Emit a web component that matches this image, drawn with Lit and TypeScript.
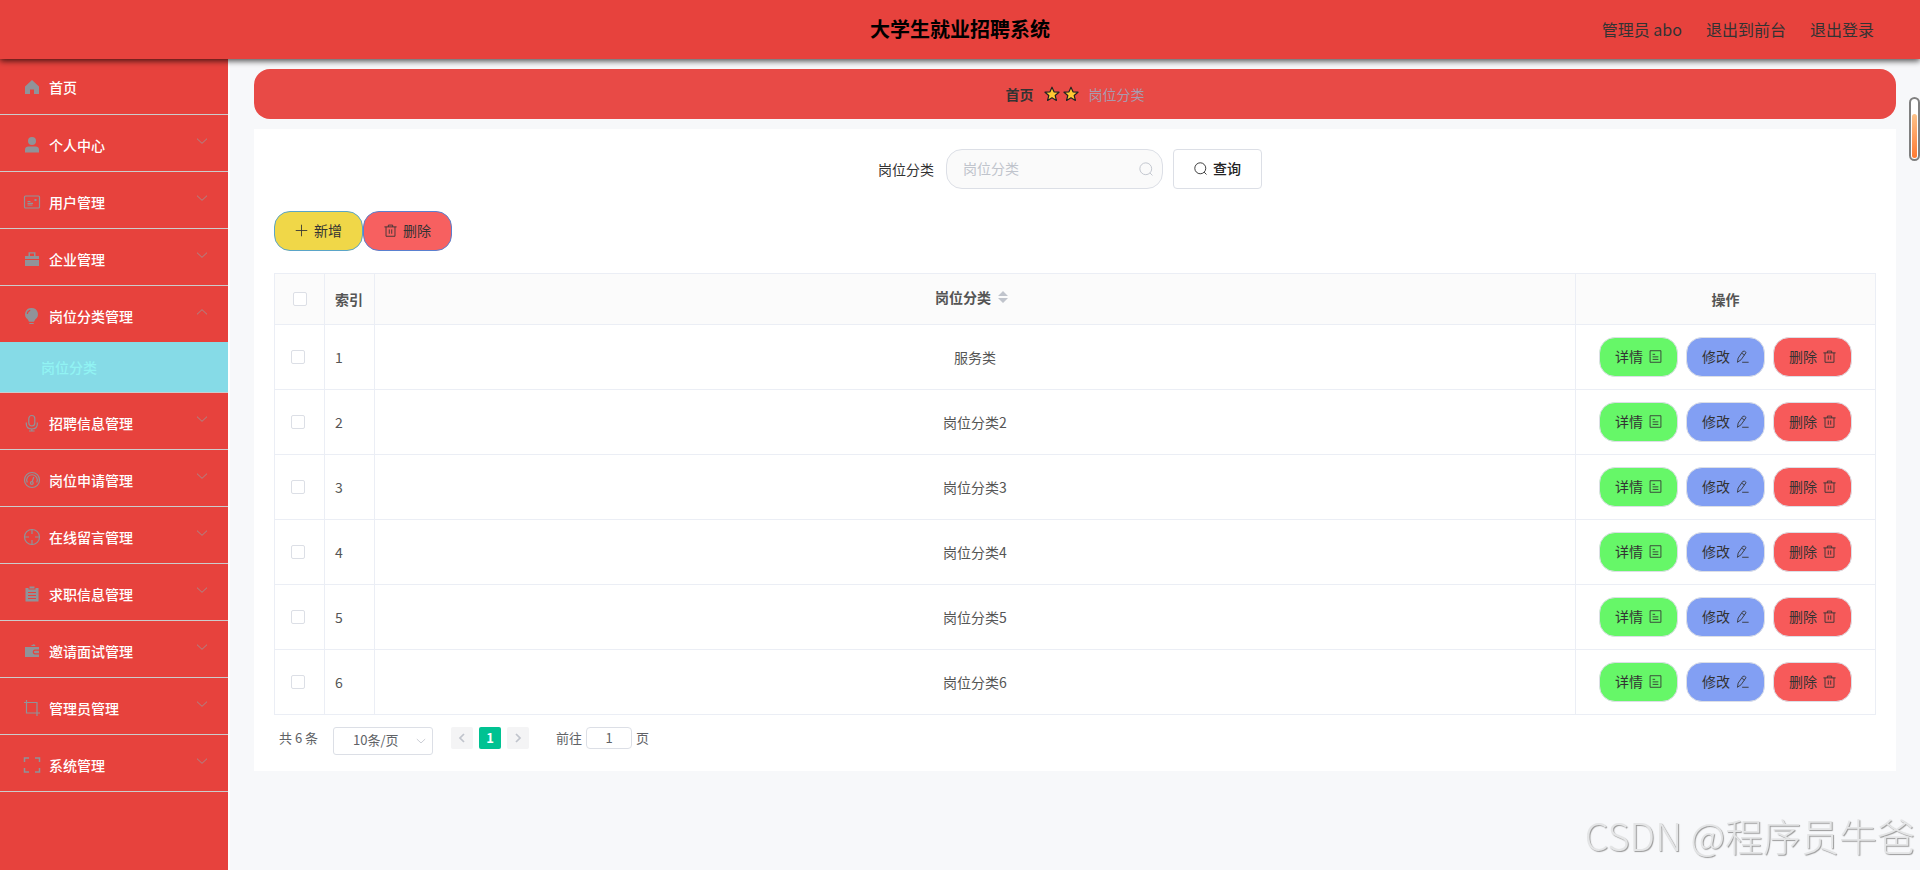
import { LitElement, html, svg, css } from "lit";
import { customElement } from "lit/decorators.js";

const glyphs: Record<string, unknown> = {
  home: svg`<path d="M2 8.600 9 2l7 6.600V16h-5v-4.500H7V16H2z" fill="currentColor"/>`,
  user: svg`<circle cx="9" cy="5" r="4" fill="currentColor"/><path d="M2 16.500v-2.700c0-2.200 1.500-3.300 3.400-3.300h7.200c1.900 0 3.400 1.100 3.400 3.300v2.700z" fill="currentColor"/>`,
  card: svg`<rect x="1.500" y="3" width="15" height="12" rx="1"/><path d="M4.500 8.500h3M4.500 10.300h5.500M4.500 12h5"/><path d="M11.500 6h2v2h-2z" fill="currentColor"/>`,
  briefcase: svg`<path d="M2 6h3.500V2.200h7V6H16v3H2zM7 3.600V6h4V3.600zM2 10h14v6H2z" fill="currentColor" fill-rule="evenodd"/>`,
  bulb: svg`<path d="M8.500 1a6.300 6.300 0 0 1 3.700 11.500L11 14.800H6l-1.200-2.300A6.300 6.300 0 0 1 8.500 1zM6.300 16h4.400v1H6.300z" fill="currentColor"/><path d="M4.300 7A4.300 4.300 0 0 1 7.200 3.200" stroke="#e7423d"/>`,
  mic: svg`<rect x="5.800" y="1.500" width="6" height="10.500" rx="3"/><path d="M3.300 8.500v1.500c0 3 2.200 5 5.500 5s5.500-2 5.500-5V8.500M8.800 15v2M6 17h5.600"/>`,
  gauge: svg`<circle cx="9" cy="9" r="7.500"/><path d="M4.300 11.500A5.300 5.300 0 1 1 13.700 11.500M9.200 10.500 10.800 6"/><circle cx="8.800" cy="12" r="1.400"/>`,
  aim: svg`<circle cx="9" cy="9" r="7.500"/><path d="M9 1.500v4.500M9 12v4.500M1.500 9H6M12 9h4.500"/>`,
  order: svg`<path d="M2.500 3h3v1.500h7V3h3v13.500h-13zM6.500 1.500h5v2h-5z" fill="currentColor"/><path d="M5 7.500h8M5 10.500h8M5 13.500h8" stroke="#e7423d"/>`,
  wallet: svg`<path d="M2 5h14v2.500h-4c-3 0-3 5 0 5h4V15H2zM7.500 4 11 2l1.700 2zM12 8.800h4v2.400h-4c-1.500 0-1.500-2.400 0-2.400z" fill="currentColor"/>`,
  crop: svg`<path d="M3.500 1v13h13.500M1 3.500h13V17"/>`,
  full: svg`<path d="M1.500 6V2H6M12 2h4.500v4M16.500 12v4H12M6 16H1.500v-4" stroke-width="1.500"/>`,
  down: svg`<path d="m1.500 5.500 7.500 7 7.500-7" stroke-width="1.500"/>`,
  up: svg`<path d="m1.500 12.500 7.500-7 7.500 7" stroke-width="1.500"/>`,
  left: svg`<path d="m12 3-6 6 6 6" stroke-width="2.600"/>`,
  right: svg`<path d="m6 3 6 6-6 6" stroke-width="2.600"/>`,
  plus: svg`<path d="M9 1v16M1 9h16"/>`,
  search: svg`<circle cx="8.700" cy="8.700" r="7.600"/><path d="m14 14 3.300 3.300"/>`,
  trash: svg`<path d="M.5 4h17M6 4V1.500h6V4M2.800 4v13h12.400V4M7.300 7.500v6M10.700 7.500v6"/>`,
  doc: svg`<path d="M1.500 1h15v16h-15zM5 6h3.500M5 9.500h8M5 13h8"/>`,
  edit: svg`<path d="M3 11.200 9.500 1.800q2.500-1 4.500 1.700L7 13.500 2 17zM8 4.500l4 2.500M8.500 17H17.500"/>`,
};

const icon = (name: string, cls: string) => html`
  <svg class=${cls} viewBox="0 0 18 18" fill="none" stroke="currentColor" stroke-width="1.200" aria-hidden="true">${glyphs[name]}</svg>`;

const star = html`<svg class="star" viewBox="0 0 16 16" aria-hidden="true">
  <path d="m8 1.200 2 4.600 5 .4-3.800 3.300 1.200 4.900L8 11.800l-4.400 2.600 1.200-4.900L1 6.200l5-.4z" fill="#ffc933" stroke="#222" stroke-width="1.200" stroke-linejoin="round"/></svg>`;

const menu = [
  { icon: "user", label: "个人中心" },
  { icon: "card", label: "用户管理" },
  { icon: "briefcase", label: "企业管理" },
  { icon: "bulb", label: "岗位分类管理", child: "岗位分类" },
  { icon: "mic", label: "招聘信息管理" },
  { icon: "gauge", label: "岗位申请管理" },
  { icon: "aim", label: "在线留言管理" },
  { icon: "order", label: "求职信息管理" },
  { icon: "wallet", label: "邀请面试管理" },
  { icon: "crop", label: "管理员管理" },
  { icon: "full", label: "系统管理" },
];

const rows = ["服务类", "岗位分类2", "岗位分类3", "岗位分类4", "岗位分类5", "岗位分类6"];

@customElement("app-root")
export class AppRoot extends LitElement {
  static styles = css`
    :host {
      display: flex;
      flex-direction: column;
      min-height: 100vh;
      background: #f7f8fa;
      color: #333;
      font: 14px/20px "Noto Sans CJK SC", sans-serif;
    }
    * { box-sizing: border-box; }
    a { color: inherit; text-decoration: none; }
    button, input, select { font: inherit; color: inherit; margin: 0; }
    button { cursor: pointer; }
    svg { flex: none; }
    svg [fill="currentColor"] { stroke: none; }
    .topbar {
      position: relative;
      display: grid;
      grid-template-columns: 1fr auto 1fr;
      align-items: center;
      height: 59px;
      padding-bottom: 1px;
      background: #e7423d;
      box-shadow: 0 2px 6px rgba(0, 0, 0, 0.7);
    }
    .title { grid-column: 2; margin: 0; font-size: 20px; line-height: 28px; font-weight: 700; color: #000; }
    .account { display: flex; justify-content: flex-end; gap: 24px; padding-right: 46px; font-size: 16px; line-height: 24px; }
    .layout { display: flex; flex: 1; }
    .sidebar { flex: 0 0 230px; background: #e7423d; border-right: 2px solid #fff; }
    .menu { list-style: none; margin: 0; padding: 0; }
    .group { border-bottom: 1px solid #ccc; }
    .entry {
      display: flex;
      align-items: center;
      gap: 8px;
      width: 100%;
      height: 56px;
      padding: 4px 20px 0 23px;
      border: 0;
      background: none;
      color: #fff;
      font-weight: 500;
      text-align: left;
    }
    .entry.home { height: 55px; padding-top: 1px; }
    .entry-icon { width: 18px; height: 18px; color: #909399; }
    .arrow { width: 12px; height: 12px; margin: 0 0 8px auto; color: #a8898b; }
    .child { display: flex; align-items: center; height: 50px; padding-left: 41px; background: #86dbe7; color: #91f3f3; font-weight: 500; }
    .main { flex: 1; min-width: 0; padding: 10px 24px; }
    .crumbs {
      display: flex;
      align-items: center;
      justify-content: center;
      height: 50px;
      margin-bottom: 10px;
      border-radius: 16px;
      background: #e84a46;
    }
    .crumb-home { font-weight: 700; }
    .stars { display: flex; gap: 3px; margin: 0 10px; }
    .star { width: 16px; height: 16px; }
    .crumb-now { color: #a99aad; }
    .card { padding: 20px 20px 16px; background: #fff; }
    .search { display: flex; align-items: center; justify-content: center; gap: 10px; padding-right: 10px; margin-bottom: 22px; }
    .label { padding-right: 2px; }
    .field { position: relative; display: flex; }
    .field-input { width: 217px; height: 40px; padding: 0 32px 2px 16px; border: 1px solid #dcdfe6; border-radius: 16px; background: #fafafa; outline: 0; }
    .field-input::placeholder { color: #c0c4cc; opacity: 1; }
    .field-icon { position: absolute; right: 10px; top: 13px; width: 14px; height: 14px; color: #c0c4cc; }
    .btn { display: flex; align-items: center; justify-content: center; gap: 6px; width: 89px; height: 40px; padding: 0 0 2px; border: 1px solid #dcdfe6; border-radius: 4px; background: #fff; font-weight: 500; color: #222; }
    .tools { display: flex; margin-bottom: 22px; }
    .tools .btn { border-radius: 16px; color: #333; font-weight: 400; }
    .tools .add { background: #f0d748; border-color: #5aa5c8; }
    .tools .remove { background: #f76060; border-color: #5a80d0; }
    .btn-icon { width: 13px; height: 13px; }
    .grid { width: 100%; table-layout: fixed; border-collapse: separate; border-spacing: 0; border: solid #ebeef5; border-width: 1px 0 0 1px; color: #555; }
    .grid th, .grid td { padding: 0; border: solid #ebeef5; border-width: 0 1px 1px 0; text-align: center; }
    .grid th { height: 51px; background: #fbfbfb; font-weight: 700; }
    .grid td { height: 65px; }
    .narrow { width: 50px; }
    .wide { width: 300px; }
    .grid .index { padding-left: 10px; text-align: left; }
    .grid .pick { padding-right: 3px; }
    .check { display: block; appearance: none; width: 14px; height: 14px; margin: 0 auto; border: 1px solid #dcdfe6; border-radius: 2px; background: #fff; }
    .check:checked { background: #00c292; }
    .sort { display: flex; align-items: center; justify-content: center; padding-bottom: 4px; }
    .caret { width: 24px; height: 20px; }
    .actions { display: flex; justify-content: center; gap: 8px; }
    .act { display: flex; align-items: center; justify-content: center; gap: 6px; width: 79px; height: 40px; padding: 0 0 2px; border: 1px solid #dcdfe6; border-radius: 16px; color: #333; }
    .view { background: #66f768; }
    .edit { background: #829ff3; }
    .drop { background: #f75a5a; }
    .pager { display: flex; align-items: flex-start; padding: 12px 5px 0; font-size: 13px; line-height: 22px; color: #606266; }
    .size { position: relative; display: flex; margin: 0 18px 0 15px; }
    .size-select { appearance: none; width: 100px; height: 28px; padding: 0 0 2px 19px; border: 1px solid #dcdfe6; border-radius: 3px; background: #fff; }
    .size-icon { position: absolute; right: 7px; top: 9px; width: 10px; height: 10px; color: #c0c4cc; pointer-events: none; }
    .pages { display: flex; gap: 6px; margin-right: 27px; }
    .page { display: grid; place-items: center; width: 22px; height: 22px; padding: 0; border: 0; border-radius: 2px; background: #f4f4f5; color: #c0c4cc; font-weight: 700; }
    .page.on { background: #00c292; color: #fff; }
    .page-icon { width: 12px; height: 12px; }
    .jump { display: flex; gap: 4px; }
    .jump-input { width: 46px; height: 22px; padding: 0; border: 1px solid #dcdfe6; border-radius: 4px; text-align: center; background: #fff; }
    .meter { position: fixed; right: 0; top: 97px; width: 11px; height: 64px; padding: 15px 1px 1px; border: 2px solid #808080; border-radius: 6px; background: #fff; }
    .meter-fill { height: 100%; border-radius: 3px; background: linear-gradient(#fcc28a, #ff7a33); border: 0; }
    .mark { position: fixed; right: 5px; bottom: 7px; font-size: 38px; line-height: 56px; font-weight: 300; color: #e4e5e6; text-shadow: 1px 1px 1px #999; pointer-events: none; }
  `;

  render() {
    return html`
      <header class="topbar">
        <h1 class="title">大学生就业招聘系统</h1>
        <nav class="account"><span>管理员 abo</span><a href="#front">退出到前台</a><a href="#logout">退出登录</a></nav>
      </header>
      <div class="layout">
        <nav class="sidebar">
          <ul class="menu">
            <li class="group"><a class="entry home" href="#home">${icon("home", "entry-icon")}首页</a></li>
            ${menu.map((m) => html`
              <li class="group">
                <button class="entry" aria-expanded=${m.child ? "true" : "false"}>
                  ${icon(m.icon, "entry-icon")}<span>${m.label}</span>${icon(m.child ? "up" : "down", "arrow")}
                </button>
                ${m.child ? html`<a class="child" href="#category">${m.child}</a>` : ""}
              </li>`)}
          </ul>
        </nav>
        <main class="main">
          <nav class="crumbs">
            <a class="crumb-home" href="#home">首页</a><span class="stars">${star}${star}</span><span class="crumb-now">岗位分类</span>
          </nav>
          <section class="card">
            <form class="search" @submit=${(e: Event) => e.preventDefault()}>
              <label class="label" for="keyword">岗位分类</label>
              <div class="field">
                <input class="field-input" id="keyword" type="text" placeholder="岗位分类" />
                ${icon("search", "field-icon")}
              </div>
              <button class="btn" type="submit">${icon("search", "btn-icon")}查询</button>
            </form>
            <div class="tools">
              <button class="btn add">${icon("plus", "btn-icon")}新增</button>
              <button class="btn remove">${icon("trash", "btn-icon")}删除</button>
            </div>
            <table class="grid">
              <thead>
                <tr>
                  <th class="narrow"><input class="check" type="checkbox" aria-label="全选" /></th>
                  <th class="narrow index">索引</th>
                  <th><span class="sort">岗位分类<svg class="caret" viewBox="0 0 24 20" fill="#c0c4cc" aria-hidden="true"><path d="m7 9 5-5 5 5zM7 11l5 5 5-5z"/></svg></span></th>
                  <th class="wide">操作</th>
                </tr>
              </thead>
              <tbody>
                ${rows.map((name, i) => html`
                  <tr>
                    <td class="pick"><input class="check" type="checkbox" aria-label=${name} /></td>
                    <td class="index">${i + 1}</td>
                    <td>${name}</td>
                    <td>
                      <div class="actions">
                        <button class="act view">详情${icon("doc", "btn-icon")}</button>
                        <button class="act edit">修改${icon("edit", "btn-icon")}</button>
                        <button class="act drop">删除${icon("trash", "btn-icon")}</button>
                      </div>
                    </td>
                  </tr>`)}
              </tbody>
            </table>
            <div class="pager">
              <span>共 6 条</span>
              <div class="size">
                <select class="size-select" aria-label="每页条数"><option>10条/页</option></select>
                ${icon("down", "size-icon")}
              </div>
              <div class="pages">
                <button class="page" aria-label="上一页">${icon("left", "page-icon")}</button>
                <button class="page on">1</button>
                <button class="page" aria-label="下一页">${icon("right", "page-icon")}</button>
              </div>
              <div class="jump">
                <label for="jump">前往</label><input class="jump-input" id="jump" type="text" .value=${"1"} /><span>页</span>
              </div>
            </div>
          </section>
        </main>
      </div>
      <div class="meter"><div class="meter-fill"></div></div>
      <div class="mark">CSDN @程序员牛爸</div>
    `;
  }
}
